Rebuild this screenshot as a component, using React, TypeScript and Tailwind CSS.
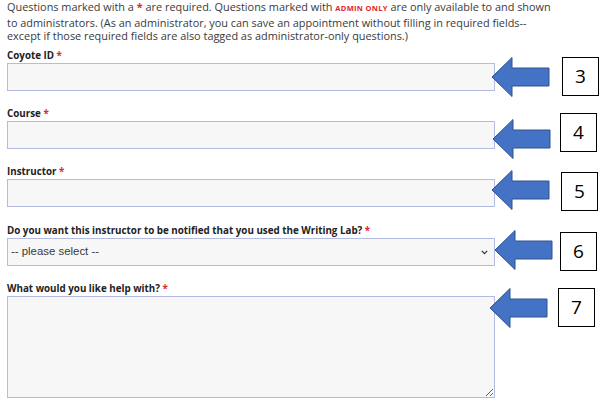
import React from 'react';

type Note = { n: string; arrow: string; box: string };

const Arrow: React.FC<{ className: string }> = ({ className }) => (
  <svg width="60" height="42" viewBox="0 0 60 42" className={`absolute ${className}`}>
    <path d="M1 21 L21 1.5 L21 12 L58 12 L58 30 L21 30 L21 40.5 Z" fill="#4472C4" stroke="#2F528F" strokeWidth="1" strokeLinejoin="miter" />
  </svg>
);

const Annotation: React.FC<{ note: Note }> = ({ note }) => (
  <>
    <Arrow className={note.arrow} />
    <div className={`absolute w-[37px] h-[39px] border border-black bg-white flex items-center justify-center text-[19px] text-black font-['Open_Sans',sans-serif] ${note.box}`}>
      {note.n}
    </div>
  </>
);

const Label: React.FC<{ text: string }> = ({ text }) => (
  <div className="text-[9.8px] leading-[14px] font-bold text-[#222]">
    {text} <span className="text-[#e0262b]">*</span>
  </div>
);

const fieldBox = 'w-[488px] bg-[#f7f7f7] border border-[#b3bce0] outline-none';

export default function App() {
  return (
    <div className="relative w-[603px] h-[417px] bg-white overflow-hidden font-['Open_Sans',sans-serif] text-[#3a3a3a]">
      <div className="pl-[7px]">
        <p className="text-[10.9px] leading-[13.5px] whitespace-nowrap">
          Questions marked with a <span className="text-[#e0262b] font-bold">*</span> are required. Questions marked with{' '}
          <span className="text-[#e0262b] font-bold text-[7.5px] tracking-[0.3px]">ADMIN ONLY</span> are only available to and shown
          <br />
          to administrators. (As an administrator, you can save an appointment without filling in required fields--
          <br />
          except if those required fields are also tagged as administrator-only questions.)
        </p>

        <div className="mt-[6.5px] flex flex-col gap-[16px]">
          <div>
            <Label text="Coyote ID" />
            <div className="relative">
              <input className={`${fieldBox} h-[28px] block`} />
              <Annotation note={{ n: '3', arrow: 'left-[484px] top-[-7px]', box: 'left-[555px] top-[-6px]' }} />
            </div>
          </div>

          <div>
            <Label text="Course" />
            <div className="relative">
              <input className={`${fieldBox} h-[28px] block`} />
              <Annotation note={{ n: '4', arrow: 'left-[485px] top-[-3px]', box: 'left-[553px] top-[-8px]' }} />
            </div>
          </div>

          <div>
            <Label text="Instructor" />
            <div className="relative">
              <input className={`${fieldBox} h-[28px] block`} />
              <Annotation note={{ n: '5', arrow: 'left-[484px] top-[-10px]', box: 'left-[554px] top-[-7px]' }} />
            </div>
          </div>

          <div className="mt-[1px]">
            <Label text="Do you want this instructor to be notified that you used the Writing Lab?" />
            <div className="relative">
              <div className={`${fieldBox} h-[28px] flex items-center justify-between pl-[3px] pr-[6px] font-['Liberation_Sans',Arial,sans-serif] text-[11.4px] text-[#3a3a3a]`}>
                <span>-- please select --</span>
                <svg width="7" height="5" viewBox="0 0 7 5">
                  <path d="M0.8 0.8 L3.5 3.6 L6.2 0.8" fill="none" stroke="#333" strokeWidth="1.2" />
                </svg>
              </div>
              <Annotation note={{ n: '6', arrow: 'left-[487px] top-[-9px]', box: 'left-[553px] top-[-6px]' }} />
            </div>
          </div>

          <div>
            <Label text="What would you like help with?" />
            <div className="relative">
              <textarea className={`${fieldBox} h-[102px] block`} />
              <Annotation note={{ n: '7', arrow: 'left-[482px] top-[-9px]', box: 'left-[551px] top-[-8px]' }} />
            </div>
          </div>
        </div>
      </div>
    </div>
  );
}
